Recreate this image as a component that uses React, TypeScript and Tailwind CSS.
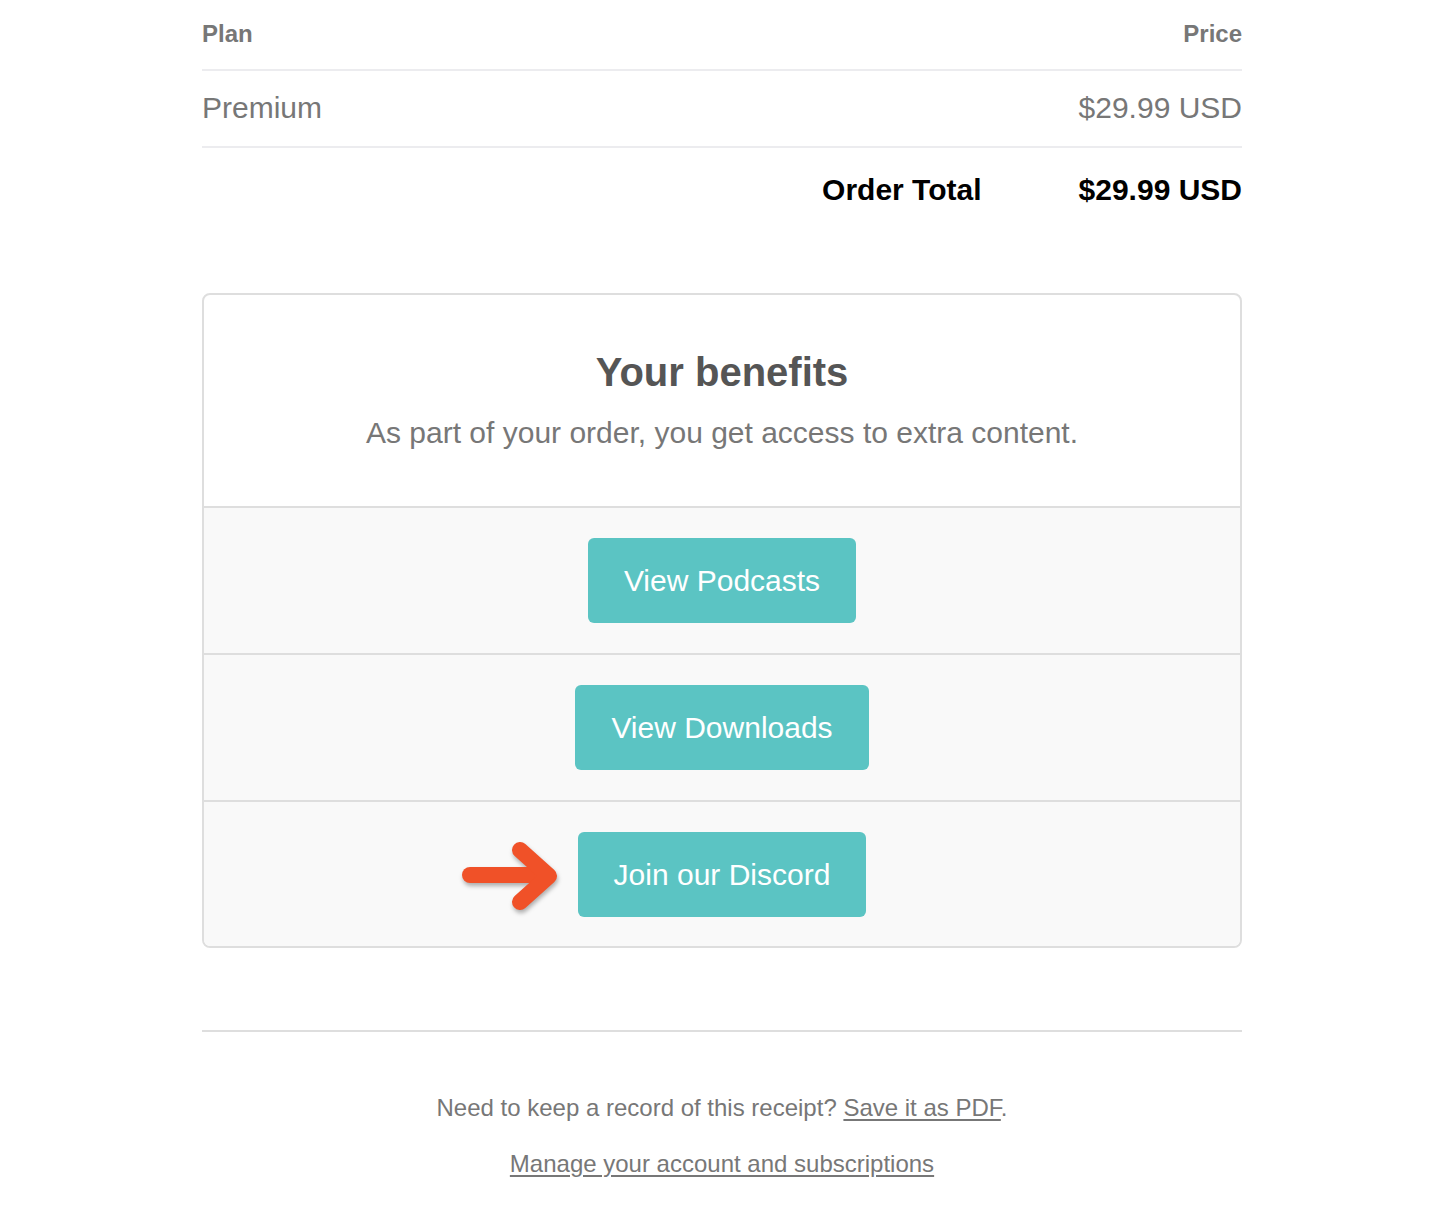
import { ReactNode } from "react";

function BenefitButton({ children }: { children: ReactNode }) {
  return (
    <a
      href="#"
      className="inline-block rounded-md bg-[#5bc4c3] px-9 py-7 text-[30px] leading-[29px] text-white"
    >
      {children}
    </a>
  );
}

function Arrow() {
  return (
    <svg
      width="110"
      height="82"
      viewBox="0 0 110 82"
      className="absolute left-[-123px] top-[4px] drop-shadow-[1px_3px_2px_rgba(0,0,0,0.3)]"
      fill="none"
      stroke="#f05128"
      strokeWidth="16"
      strokeLinecap="round"
      strokeLinejoin="round"
    >
      <path d="M15 39 H90" />
      <path d="M65 14 L94 40 L65 66" />
    </svg>
  );
}

export default function App() {
  return (
    <div className="min-h-screen bg-white font-['Liberation_Sans',Arial,sans-serif]">
      <div className="ml-[202px] w-[1040px]">
        {/* order table */}
        <div className="flex justify-between border-b-2 border-[#ececef] pt-[20px] pb-[21px] text-[24px] font-bold leading-[28px] text-[#777]">
          <span>Plan</span>
          <span>Price</span>
        </div>
        <div className="flex justify-between border-b-2 border-[#ececef] pt-[20px] pb-[21px] text-[30px] leading-[34px] text-[#777]">
          <span>Premium</span>
          <span>$29.99 USD</span>
        </div>
        <div className="flex justify-end gap-[97px] pt-[25px] text-[30px] font-bold leading-[34px] text-black">
          <span>Order Total</span>
          <span>$29.99 USD</span>
        </div>

        {/* benefits card */}
        <div className="mt-[86px] overflow-hidden rounded-lg border-2 border-[#dedede]">
          <div className="h-[211px] pt-[54px] text-center">
            <h2 className="text-[40px] font-bold leading-[46px] text-[#555]">Your benefits</h2>
            <p className="mt-[21px] text-[30px] leading-[34px] text-[#777]">
              As part of your order, you get access to extra content.
            </p>
          </div>
          <div className="flex h-[147px] items-center justify-center border-t-2 border-[#dedede] bg-[#f9f9f9]">
            <BenefitButton>View Podcasts</BenefitButton>
          </div>
          <div className="flex h-[147px] items-center justify-center border-t-2 border-[#dedede] bg-[#f9f9f9]">
            <BenefitButton>View Downloads</BenefitButton>
          </div>
          <div className="flex h-[146px] items-center justify-center border-t-2 border-[#dedede] bg-[#f9f9f9]">
            <div className="relative">
              <Arrow />
              <BenefitButton>Join our Discord</BenefitButton>
            </div>
          </div>
        </div>

        {/* footer */}
        <div className="mt-[82px] border-t-2 border-[#dedede] pt-[62px] text-center text-[24px] leading-[28px] text-[#777]">
          <p>
            Need to keep a record of this receipt?{" "}
            <a href="#" className="underline underline-offset-[3px]">
              Save it as PDF
            </a>
            .
          </p>
          <p className="mt-[28px]">
            <a href="#" className="underline underline-offset-[3px]">
              Manage your account and subscriptions
            </a>
          </p>
        </div>
      </div>
    </div>
  );
}
